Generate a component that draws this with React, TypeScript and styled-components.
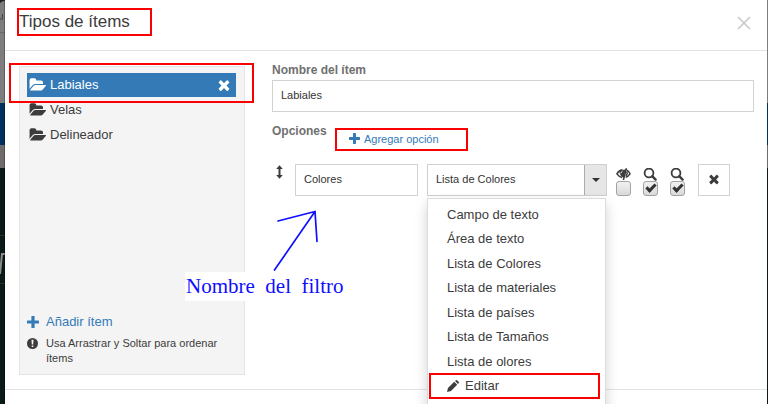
import React, { useState } from 'react';
import styled, { createGlobalStyle, css } from 'styled-components';

const GlobalStyle = createGlobalStyle`
  *, *::before, *::after { box-sizing: border-box; }
  html, body { margin: 0; height: 100%; overflow: hidden; }
  body {
    font-family: "Liberation Sans", Arial, sans-serif;
    font-size: 13px;
    color: #3c3c3c;
  }
  button, input, select { font: inherit; color: inherit; margin: 0; }
  button { border: 0; padding: 0; background: none; cursor: pointer; }
`;

const Backdrop = styled.div`
  position: relative;
  min-height: 100vh;
  padding: 0 1px 0 5px;
  background: linear-gradient(#7d7d7d 103px, #00305f 103px 145px, #6f6b6a 145px 168px, #0a1a18 168px);
`;

const SiteEdge = styled.svg`
  position: absolute;
  left: 0;
  top: 0;
`;

const Dialog = styled.section`
  position: relative;
  min-height: 100vh;
  background: #fff;
`;

const Header = styled.header`
  display: flex;
  justify-content: space-between;
  align-items: flex-start;
  height: 51px;
  padding: 8px 16px 0 12px;
  border-bottom: 1px solid #e3e3e3;
`;

const highlight = css`
  border: 2px solid #fb0000;
`;

const Title = styled.h1`
  ${highlight}
  margin: 0;
  width: 135px;
  height: 28px;
  line-height: 23px;
  font-size: 17px;
  font-weight: 400;
  white-space: nowrap;
`;

const CloseButton = styled.button`
  display: flex;
  margin-top: 8px;
`;

const Body = styled.div`
  display: grid;
  grid-template-columns: 226px minmax(0, 1fr);
  column-gap: 27px;
  padding: 15px 13px 14px 14px;
`;

const Sidebar = styled.aside`
  display: flex;
  flex-direction: column;
  min-height: 309px;
  padding: 6px 8px 8px 7px;
  background: #f4f4f4;
  border: 1px solid #e4e4e4;
`;

const ItemList = styled.ul`
  display: grid;
  gap: 1px;
  margin: 0;
  padding: 0;
  list-style: none;
`;

const Item = styled.li<{ $active?: boolean }>`
  position: relative;
  display: flex;
  align-items: center;
  height: 24px;
  padding: 0 4px 1px 2px;
  color: ${p => (p.$active ? '#fff' : 'inherit')};
  background: ${p => (p.$active ? '#337ab7' : 'transparent')};
`;

const ItemButton = styled.button`
  display: flex;
  flex: 1;
  align-items: center;
  gap: 4px;
  line-height: 22px;
`;

const RemoveButton = styled.button`
  display: flex;
`;

const Frame = styled.span<{ $inset: string }>`
  ${highlight}
  position: absolute;
  inset: ${p => p.$inset};
  pointer-events: none;
  z-index: 1;
`;

const SidebarFoot = styled.div`
  display: grid;
  grid-template-columns: 12px 1fr;
  column-gap: 7px;
  row-gap: 3px;
  margin-top: auto;
`;

const AddItem = styled.button`
  display: grid;
  grid-column: 1 / -1;
  grid-template-columns: subgrid;
  align-items: center;
  justify-items: start;
  line-height: 22px;
  color: #337ab7;
`;

const Hint = styled.p`
  display: grid;
  grid-column: 1 / -1;
  grid-template-columns: subgrid;
  margin: 0;
  font-size: 11px;
  line-height: 15px;
  svg { margin-top: 2px; }
`;

const Form = styled.form`
  display: flex;
  flex-direction: column;
  align-items: stretch;
`;

const labelText = css`
  font-size: 12px;
  font-weight: 700;
  line-height: 14px;
  color: #707070;
`;

const Label = styled.label`
  ${labelText}
  margin: -3px 0 3px;
`;

const TextInput = styled.input`
  width: 100%;
  height: 32px;
  padding: 0 8px 3px;
  font-size: 11px;
  color: #333;
  background: #fff;
  border: 1px solid #d2d2d2;
  border-radius: 0;
  outline: 0;
`;

const OptionsHead = styled.div`
  display: flex;
  align-items: flex-start;
  gap: 10px;
  margin-top: 16px;
`;

const OptionsTitle = styled.h2`
  ${labelText}
  margin: -4px 0 0;
  width: 53px;
`;

const AddOption = styled.button`
  ${highlight}
  display: flex;
  align-items: center;
  gap: 4px;
  width: 133px;
  height: 23px;
  padding: 0 0 2px 12px;
  font-size: 11px;
  color: #337ab7;
`;

const OptionRow = styled.div`
  display: flex;
  align-items: flex-start;
  margin-top: 13px;
  padding: 0 24px 0 3px;
`;

const DragHandle = styled.button`
  display: flex;
  width: 20px;
  padding-top: 1px;
  cursor: move;
`;

const NameCell = styled.div`
  flex: 123 1 0;
  margin-right: 9px;
`;

const Combo = styled.div`
  position: relative;
  display: flex;
  flex: 178 1 0;
  height: 32px;
  border: 1px solid #cfcfcf;
`;

const Select = styled.select`
  appearance: none;
  flex: 1;
  min-width: 0;
  padding: 0 8px 3px;
  font-size: 11px;
  color: #333;
  background: #fff;
  border: 0;
  border-radius: 0;
  outline: 0;
`;

const ComboToggle = styled.button`
  display: flex;
  align-items: center;
  justify-content: center;
  width: 22px;
  background: #e6e6e6;
  border-left: 1px solid #adadad;
`;

const Menu = styled.ul`
  position: absolute;
  top: 33px;
  left: -1px;
  right: 0;
  display: grid;
  grid-auto-rows: 1fr;
  height: 221px;
  margin: 0;
  padding: 3px 0 20px;
  list-style: none;
  background: #fff;
  border: 1px solid #dcdcdc;
  box-shadow: 0 6px 12px rgba(0, 0, 0, 0.18);
  z-index: 2;
`;

const MenuItem = styled.li`
  position: relative;
  display: flex;
`;

const MenuButton = styled.button`
  display: flex;
  flex: 1;
  align-items: center;
  gap: 6px;
  padding-left: 19px;
  white-space: nowrap;
`;

const Flags = styled.div`
  display: flex;
  gap: 12px;
  margin: 4px 13px 0 9px;
`;

const Flag = styled.label`
  display: flex;
  flex-direction: column;
  align-items: center;
  width: 15px;
`;

const Check = styled.input`
  appearance: none;
  display: grid;
  width: 15px;
  height: 15px;
  background: linear-gradient(#f1f1f1, #d9d9d9);
  border: 1px solid #a3a3a3;
  border-radius: 3px;
  &:checked::after {
    content: "";
    width: 6px;
    height: 10px;
    margin: 0 0 0 4px;
    border: solid #333;
    border-width: 0 3px 3px 0;
    transform: rotate(45deg);
  }
`;

const DeleteButton = styled.button`
  display: flex;
  align-items: center;
  justify-content: center;
  width: 32px;
  height: 32px;
  padding-bottom: 2px;
  border: 1px solid #d2d2d2;
`;

const Footer = styled.footer`
  height: 15px;
  border-top: 1px solid #e3e3e3;
`;

const Note = styled.div`
  position: absolute;
  left: 180px;
  top: 208px;
  color: #0f0fff;
  svg { display: block; margin-left: 90px; overflow: visible; }
`;

const NoteText = styled.p`
  width: fit-content;
  margin: 0;
  padding: 0 1px;
  font-family: "Liberation Serif", serif;
  font-size: 21px;
  line-height: 29px;
  white-space: pre;
  background: #fff;
`;

const FaSvg = ({ size, d, w = 1792 }: { size: number; d: string; w?: number }) => (
  <svg width={Math.round((size * w) / 1792)} height={size} viewBox={`0 0 ${w} 1792`} fill="currentColor" aria-hidden="true">
    <path d={d} />
  </svg>
);

const TIMES =
  'M1490 1322q0 40-28 68l-136 136q-28 28-68 28t-68-28l-294-294-294 294q-28 28-68 28t-68-28l-136-136q-28-28-28-68t28-68l294-294-294-294q-28-28-28-68t28-68l136-136q28-28 68-28t68 28l294 294 294-294q28-28 68-28t68 28l136 136q28 28 28 68t-28 68l-294 294 294 294q28 28 28 68z';
const FOLDER =
  'M1943 952q0 31-31 66l-336 396q-43 51-120.5 86.500t-143.500 35.500h-1088q-34 0-60.500-13t-26.500-43q0-31 31-66l336-396q43-51 120.500-86.500t143.500-35.500h1088q34 0 60.500 13t26.500 43zm-343-344v160h-832q-94 0-197 47.500t-164 119.500l-337 396-5 6q0-4-.5-12.500t-.5-12.500v-960q0-92 66-158t158-66h320q92 0 158 66t66 158v32h544q92 0 158 66t66 158z';

const Plus = ({ size }: { size: number }) => (
  <svg width={size} height={size} viewBox="0 0 12 12" fill="currentColor" aria-hidden="true">
    <path d="M5 0h2q.6 0 .6.6v3.800h3.800q.6 0 .6.6v2q0 .6-.6.6H7.600v3.800q0 .6-.6.6H5q-.6 0-.6-.6V7.600H.6Q0 7.600 0 7V5q0-.6.6-.6h3.800V.6Q4.400 0 5 0z" />
  </svg>
);

const Search = () => (
  <svg width="15" height="13" viewBox="0 0 15 13" fill="none" stroke="currentColor" aria-hidden="true">
    <circle cx="6" cy="5" r="4.400" strokeWidth="1.800" />
    <path d="M9.200 8.200l3.400 3.400" strokeWidth="2.400" strokeLinecap="round" />
  </svg>
);

const EyeOff = () => (
  <svg width="15" height="13" viewBox="0 0 15 13" aria-hidden="true">
    <path d="M6.500 1.800Q2.600 2.600.9 5.800q1.800 2.700 5.300 3.700M10.800 2.200Q12.800 3.300 14 5.800q-1.500 2.500-4.400 3.600" fill="none" stroke="currentColor" strokeWidth="1.500" />
    <path d="M3.300 3L10 1.200 7.800 9.800Q3.500 8 3.300 3z" fill="currentColor" />
    <path d="M10.400.3L7.400 12M11 3.500Q11.800 6 10 8" fill="none" stroke="currentColor" strokeWidth="1.500" />
    <path d="M4.800 5.300Q5 3.800 6.500 3.400" fill="none" stroke="#fff" strokeWidth=".9" />
  </svg>
);

const types = ['Campo de texto', 'Área de texto', 'Lista de Colores', 'Lista de materiales', 'Lista de países', 'Lista de Tamaños', 'Lista de olores'];

export default function App() {
  const [type, setType] = useState('Lista de Colores');
  return (
    <>
      <GlobalStyle />
      <Backdrop>
        <SiteEdge width="5" height="404" viewBox="0 0 5 404" aria-hidden="true">
          <path d="M0 0h5v1H3L0 3z" fill="#222" />
          <path d="M0 19h2.500M2.500 14v5" fill="none" stroke="#444" />
          <path d="M0 32.500h5" stroke="#696969" />
          <path d="M0 274l2-20h3" fill="none" stroke="#8b8b8b" strokeWidth="2" />
          <path d="M0 235.500h5M0 283.500h5" stroke="#25302f" />
          <path d="M4.500 0v404" stroke="#000" opacity=".25" />
        </SiteEdge>
        <Dialog role="dialog" aria-labelledby="dialog-title">
          <Header>
            <Title id="dialog-title">Tipos de ítems</Title>
            <CloseButton aria-label="Cerrar">
              <svg width="14" height="14" viewBox="0 0 14 14" stroke="#c8c8c8" strokeWidth="1.600" aria-hidden="true">
                <path d="M1 1l12 12M13 1L1 13" />
              </svg>
            </CloseButton>
          </Header>
          <Body>
            <Sidebar>
              <ItemList>
                {['Labiales', 'Velas', 'Delineador'].map((name, i) => (
                  <Item key={name} $active={i === 0}>
                    <ItemButton>
                      <FaSvg size={16} w={1943} d={FOLDER} />
                      {name}
                    </ItemButton>
                    {i === 0 && (
                      <>
                        <RemoveButton aria-label="Eliminar Labiales">
                          <FaSvg size={16} d={TIMES} />
                        </RemoveButton>
                        <Frame $inset="-10px -18px -6px" />
                      </>
                    )}
                  </Item>
                ))}
              </ItemList>
              <SidebarFoot>
                <AddItem>
                  <Plus size={12} />
                  <span>Añadir ítem</span>
                </AddItem>
                <Hint>
                  <svg width="11" height="11" viewBox="0 0 11 11" aria-hidden="true">
                    <circle cx="5.500" cy="5.500" r="5.500" fill="currentColor" />
                    <path d="M4.500 1.800h2L6.200 6.500H4.800zM4.700 7.500h1.600v1.500H4.700z" fill="#f4f4f4" />
                  </svg>
                  <span>Usa Arrastrar y Soltar para ordenar ítems</span>
                </Hint>
              </SidebarFoot>
            </Sidebar>
            <Form onSubmit={e => e.preventDefault()}>
              <Label htmlFor="item-name">Nombre del ítem</Label>
              <TextInput id="item-name" defaultValue="Labiales" />
              <OptionsHead>
                <OptionsTitle>Opciones</OptionsTitle>
                <AddOption type="button">
                  <Plus size={11} />
                  Agregar opción
                </AddOption>
              </OptionsHead>
              <OptionRow>
                <DragHandle type="button" aria-label="Mover opción">
                  <svg width="9" height="14" viewBox="0 0 9 14" fill="currentColor" aria-hidden="true">
                    <path d="M4.500.3L7.800 4H5.500v6h2.300L4.500 13.700 1.200 10h2.300V4H1.200z" />
                  </svg>
                </DragHandle>
                <NameCell>
                  <TextInput aria-label="Nombre de la opción" defaultValue="Colores" />
                </NameCell>
                <Combo>
                  <Select aria-label="Tipo de opción" value={type} onChange={e => setType(e.target.value)}>
                    {types.map(t => (
                      <option key={t}>{t}</option>
                    ))}
                  </Select>
                  <ComboToggle type="button" aria-label="Abrir lista">
                    <svg width="8" height="4" viewBox="0 0 8 4" aria-hidden="true">
                      <path d="M0 0h8L4 4z" fill="#333" />
                    </svg>
                  </ComboToggle>
                  <Menu>
                    {types.map(t => (
                      <MenuItem key={t}>
                        <MenuButton type="button" onClick={() => setType(t)}>{t}</MenuButton>
                      </MenuItem>
                    ))}
                    <MenuItem>
                      <MenuButton type="button">
                        <svg width="12" height="12" viewBox="0 0 12 12" fill="currentColor" aria-hidden="true">
                          <path d="M0 12l1-4L7.200 1.800l3 3L4 11zM8 1L9 .2q.5-.4 1 0l1.800 1.800q.4.5 0 1L11 4z" />
                        </svg>
                        Editar
                      </MenuButton>
                      <Frame $inset="-1px 5px -1px 1px" />
                    </MenuItem>
                  </Menu>
                </Combo>
                <Flags>
                  <Flag>
                    <EyeOff />
                    <Check type="checkbox" aria-label="Ocultar" />
                  </Flag>
                  <Flag>
                    <Search />
                    <Check type="checkbox" aria-label="Buscar" defaultChecked />
                  </Flag>
                  <Flag>
                    <Search />
                    <Check type="checkbox" aria-label="Filtrar" defaultChecked />
                  </Flag>
                </Flags>
                <DeleteButton type="button" aria-label="Eliminar opción">
                  <FaSvg size={14} d={TIMES} />
                </DeleteButton>
              </OptionRow>
            </Form>
          </Body>
          <Footer />
          <Note>
            <svg width="50" height="64" viewBox="0 0 50 64" fill="none" stroke="currentColor" strokeWidth="1.700" strokeLinecap="round" aria-hidden="true">
              <path d="M-.5 62L40 3.500M3 13L40 3.500l2 30" />
            </svg>
            <NoteText>{'Nombre  del  filtro'}</NoteText>
          </Note>
        </Dialog>
      </Backdrop>
    </>
  );
}
